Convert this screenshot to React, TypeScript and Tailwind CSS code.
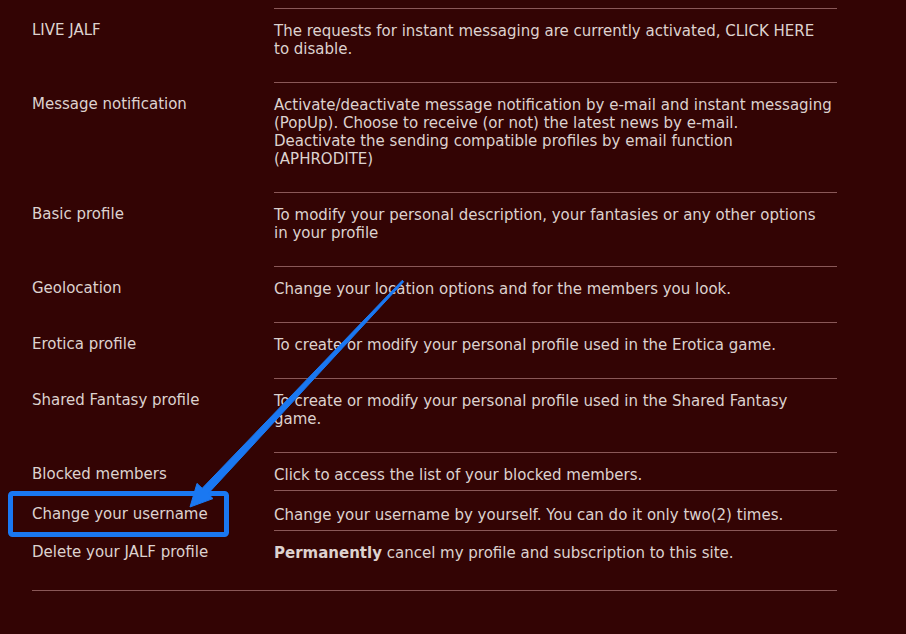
export default function App() {
  const rows: { label: string; lines: React.ReactNode[]; pt: string; pb: string }[] = [
    {
      label: "LIVE JALF",
      lines: [
        "The requests for instant messaging are currently activated, CLICK HERE",
        "to disable.",
      ],
      pt: "pt-[13px]",
      pb: "pb-[24px]",
    },
    {
      label: "Message notification",
      lines: [
        "Activate/deactivate message notification by e-mail and instant messaging",
        "(PopUp). Choose to receive (or not) the latest news by e-mail.",
        "Deactivate the sending compatible profiles by email function",
        "(APHRODITE)",
      ],
      pt: "pt-[13px]",
      pb: "pb-[24px]",
    },
    {
      label: "Basic profile",
      lines: [
        "To modify your personal description, your fantasies or any other options",
        "in your profile",
      ],
      pt: "pt-[13px]",
      pb: "pb-[24px]",
    },
    {
      label: "Geolocation",
      lines: ["Change your location options and for the members you look."],
      pt: "pt-[13px]",
      pb: "pb-[24px]",
    },
    {
      label: "Erotica profile",
      lines: ["To create or modify your personal profile used in the Erotica game."],
      pt: "pt-[13px]",
      pb: "pb-[24px]",
    },
    {
      label: "Shared Fantasy profile",
      lines: [
        "To create or modify your personal profile used in the Shared Fantasy",
        "game.",
      ],
      pt: "pt-[13px]",
      pb: "pb-[24px]",
    },
    {
      label: "Blocked members",
      lines: ["Click to access the list of your blocked members."],
      pt: "pt-[13px]",
      pb: "pb-[6px]",
    },
    {
      label: "Change your username",
      lines: ["Change your username by yourself. You can do it only two(2) times."],
      pt: "pt-[15px]",
      pb: "pb-[6px]",
    },
    {
      label: "Delete your JALF profile",
      lines: [
        <>
          <b>Permanently</b> cancel my profile and subscription to this site.
        </>,
      ],
      pt: "pt-[13px]",
      pb: "pb-[28px]",
    },
  ];

  return (
    <div
      className="relative min-h-[634px] w-full bg-[#330404] pt-2 text-[15px] leading-[18px] text-[#ddd2cf]"
      style={{ fontFamily: '"DejaVu Sans", Verdana, sans-serif' }}
    >
      <div className="ml-8 w-[805px]">
        {rows.map((r) => (
          <div key={r.label} className="grid grid-cols-[242px_1fr]">
            <div className={`${r.pt} whitespace-nowrap`}>{r.label}</div>
            <div className={`border-t border-[#8a5858] ${r.pt} ${r.pb}`}>
              {r.lines.map((l, i) => (
                <div key={i} className="whitespace-nowrap">
                  {l}
                </div>
              ))}
            </div>
          </div>
        ))}
        <div className="border-t border-[#8a5858]" />
      </div>

      {/* annotation overlay */}
      <svg
        className="pointer-events-none absolute left-0 top-0"
        width="906"
        height="634"
        viewBox="0 0 906 634"
      >
        <rect
          x="10.5"
          y="493.5"
          width="216"
          height="41"
          rx="2"
          fill="none"
          stroke="#1a78f2"
          strokeWidth="5"
        />
        <polygon
          points="402.3,280.3 202.2,488.3 197,483.4 190,507 213,498.6 208,493.7 403.7,281.7"
          fill="#1a78f2"
          stroke="#1a78f2"
          strokeWidth="1"
          strokeLinejoin="round"
        />
      </svg>
    </div>
  );
}
